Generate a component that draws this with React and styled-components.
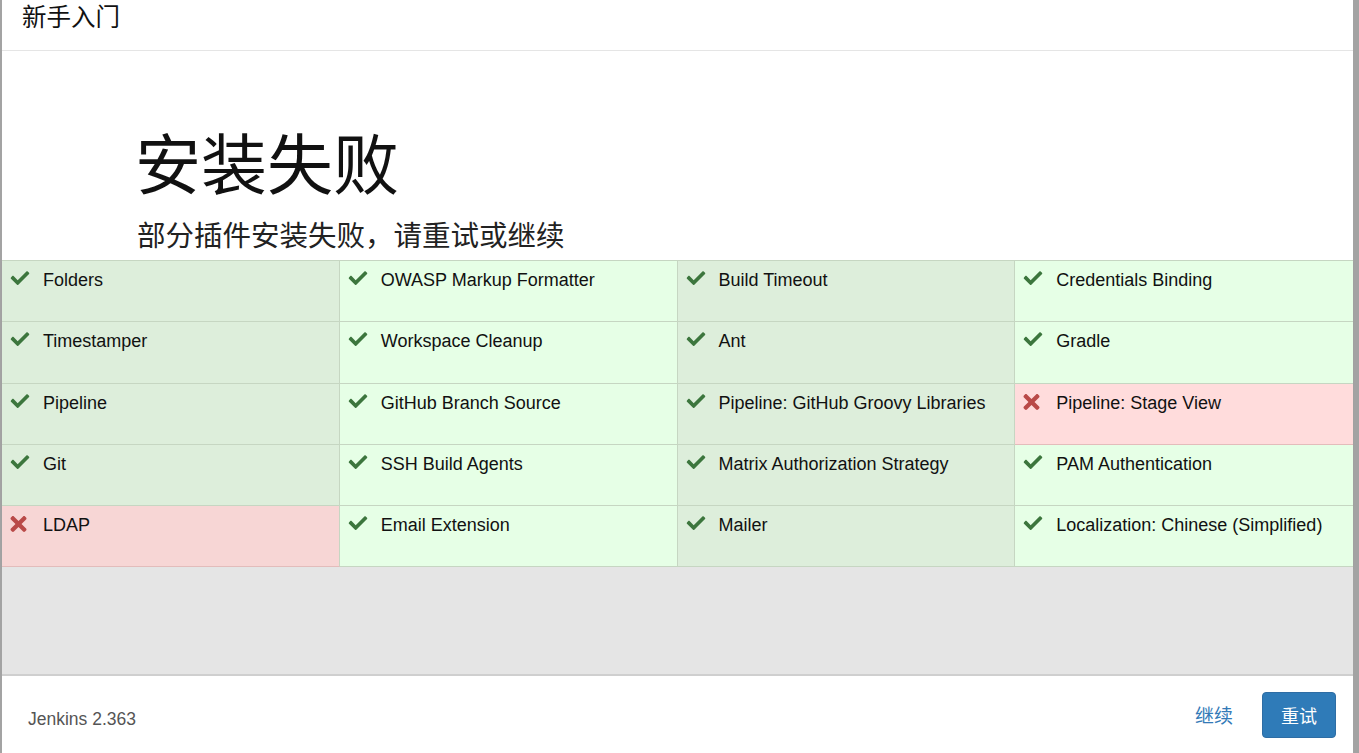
import React from "react";
import styled, { createGlobalStyle } from "styled-components";

const GlobalStyle = createGlobalStyle`
	html, body {
		margin: 0;
		padding: 0;
		height: 100%;
		overflow: hidden;
	}
	body {
		font-family: "Liberation Sans", "Noto Sans CJK SC", sans-serif;
		color: #111;
		background: #fff;
	}
	#root {
		height: 100%;
	}
`;

const plugins = [
	["Folders", true],
	["OWASP Markup Formatter", true],
	["Build Timeout", true],
	["Credentials Binding", true],
	["Timestamper", true],
	["Workspace Cleanup", true],
	["Ant", true],
	["Gradle", true],
	["Pipeline", true],
	["GitHub Branch Source", true],
	["Pipeline: GitHub Groovy Libraries", true],
	["Pipeline: Stage View", false],
	["Git", true],
	["SSH Build Agents", true],
	["Matrix Authorization Strategy", true],
	["PAM Authentication", true],
	["LDAP", false],
	["Email Extension", true],
	["Mailer", true],
	["Localization: Chinese (Simplified)", true],
];

const Frame = styled.div`
	height: 753px;
	display: flex;
	flex-direction: column;
	border-left: 2px solid #a3a3a3;
	border-right: 6px solid #a3a3a3;
	box-sizing: border-box;
`;

const Header = styled.div`
	height: 51px;
	border-bottom: 1px solid #e5e5e5;
	display: flex;
	align-items: flex-start;
	padding: 2px 0 0 20px;
	box-sizing: border-box;
	font-size: 24.5px;
	line-height: 32px;
`;

const Intro = styled.div`
	padding: 76px 0 0 133px;
	height: 209px;
	box-sizing: border-box;
`;

const Title = styled.h1`
	margin: 0;
	font-size: 66px;
	font-weight: normal;
	line-height: 78px;
`;

const Subtitle = styled.p`
	margin: 13px 0 0 2px;
	font-size: 28.5px;
	line-height: 36px;
	color: #222;
`;

const Grid = styled.div`
	display: grid;
	grid-template-columns: repeat(4, 1fr);
	border-top: 1px solid #c6d6c2;
	box-shadow: 0 2px 1px rgba(0, 0, 0, 0.08);
`;

const palette = {
	ok: ["#ddeedb", "#e6ffe6"],
	fail: ["#f7d6d5", "#ffdcdc"],
};

const Cell = styled.div`
	height: 61.3px;
	box-sizing: border-box;
	display: flex;
	align-items: flex-start;
	padding: 8px 0 0 8px;
	font-size: 18px;
	line-height: 22px;
	background: ${(p) => palette[p.$ok ? "ok" : "fail"][p.$col % 2]};
	border-right: ${(p) => (p.$col === 3 ? "none" : "1px solid #c6d6c2")};
	border-bottom: 1px solid ${(p) => (p.$ok ? "#c6d6c2" : "#e3bcbb")};
`;

const IconBox = styled.span`
	width: 33px;
	flex: none;
	display: flex;
	padding-top: 2px;
`;

const Filler = styled.div`
	flex: 1;
	background: #e5e5e5;
	border-bottom: 2px solid #cfcfcf;
`;

const Footer = styled.div`
	height: 77px;
	box-sizing: border-box;
	display: flex;
	align-items: center;
	padding: 0 17px 0 26px;
`;

const Version = styled.span`
	font-size: 17.5px;
	color: #555;
	margin-top: 9px;
`;

const Actions = styled.div`
	margin-left: auto;
	display: flex;
	align-items: center;
	gap: 29px;
`;

const LinkButton = styled.a`
	color: #337ab7;
	font-size: 19px;
	cursor: pointer;
`;

const PrimaryButton = styled.button`
	background: #2f7bb8;
	color: #fff;
	border: 1px solid #2e6da4;
	border-radius: 4px;
	font-family: inherit;
	font-size: 18px;
	width: 74px;
	height: 46px;
	cursor: pointer;
`;

function CheckIcon() {
	return (
		<svg width="20" height="16" viewBox="0 0 512 440">
			<path
				fill="#3c763d"
				d="M173.898 439.404l-166.4-166.4c-9.997-9.997-9.997-26.206 0-36.204l36.203-36.204c9.997-9.998 26.207-9.998 36.204 0L192 312.69 432.095 72.596c9.997-9.997 26.207-9.997 36.204 0l36.203 36.204c9.997 9.997 9.997 26.206 0 36.204l-294.4 294.401c-9.998 9.997-26.207 9.997-36.204-.001z"
				transform="translate(0 -60)"
			/>
		</svg>
	);
}

function CrossIcon() {
	return (
		<svg width="17" height="16" viewBox="0 80 352 352">
			<path
				fill="#b94a48"
				d="M242.72 256l100.07-100.07c12.28-12.28 12.28-32.19 0-44.48l-22.24-22.24c-12.28-12.28-32.19-12.28-44.48 0L176 189.28 75.93 89.21c-12.28-12.28-32.19-12.28-44.48 0L9.21 111.45c-12.28 12.28-12.28 32.19 0 44.48L109.28 256 9.21 356.07c-12.28 12.28-12.28 32.19 0 44.48l22.24 22.24c12.28 12.28 32.2 12.28 44.48 0L176 322.72l100.07 100.07c12.28 12.28 32.2 12.28 44.48 0l22.24-22.24c12.28-12.28 12.28-32.19 0-44.48L242.72 256z"
			/>
		</svg>
	);
}

export default function App() {
	return (
		<>
			<GlobalStyle />
			<Frame>
				<Header>新手入门</Header>
				<Intro>
					<Title>安装失败</Title>
					<Subtitle>部分插件安装失败，请重试或继续</Subtitle>
				</Intro>
				<Grid>
					{plugins.map(([name, ok], i) => (
						<Cell key={name} $ok={ok} $col={i % 4}>
							<IconBox>{ok ? <CheckIcon /> : <CrossIcon />}</IconBox>
							{name}
						</Cell>
					))}
				</Grid>
				<Filler />
				<Footer>
					<Version>Jenkins 2.363</Version>
					<Actions>
						<LinkButton>继续</LinkButton>
						<PrimaryButton>重试</PrimaryButton>
					</Actions>
				</Footer>
			</Frame>
		</>
	);
}
